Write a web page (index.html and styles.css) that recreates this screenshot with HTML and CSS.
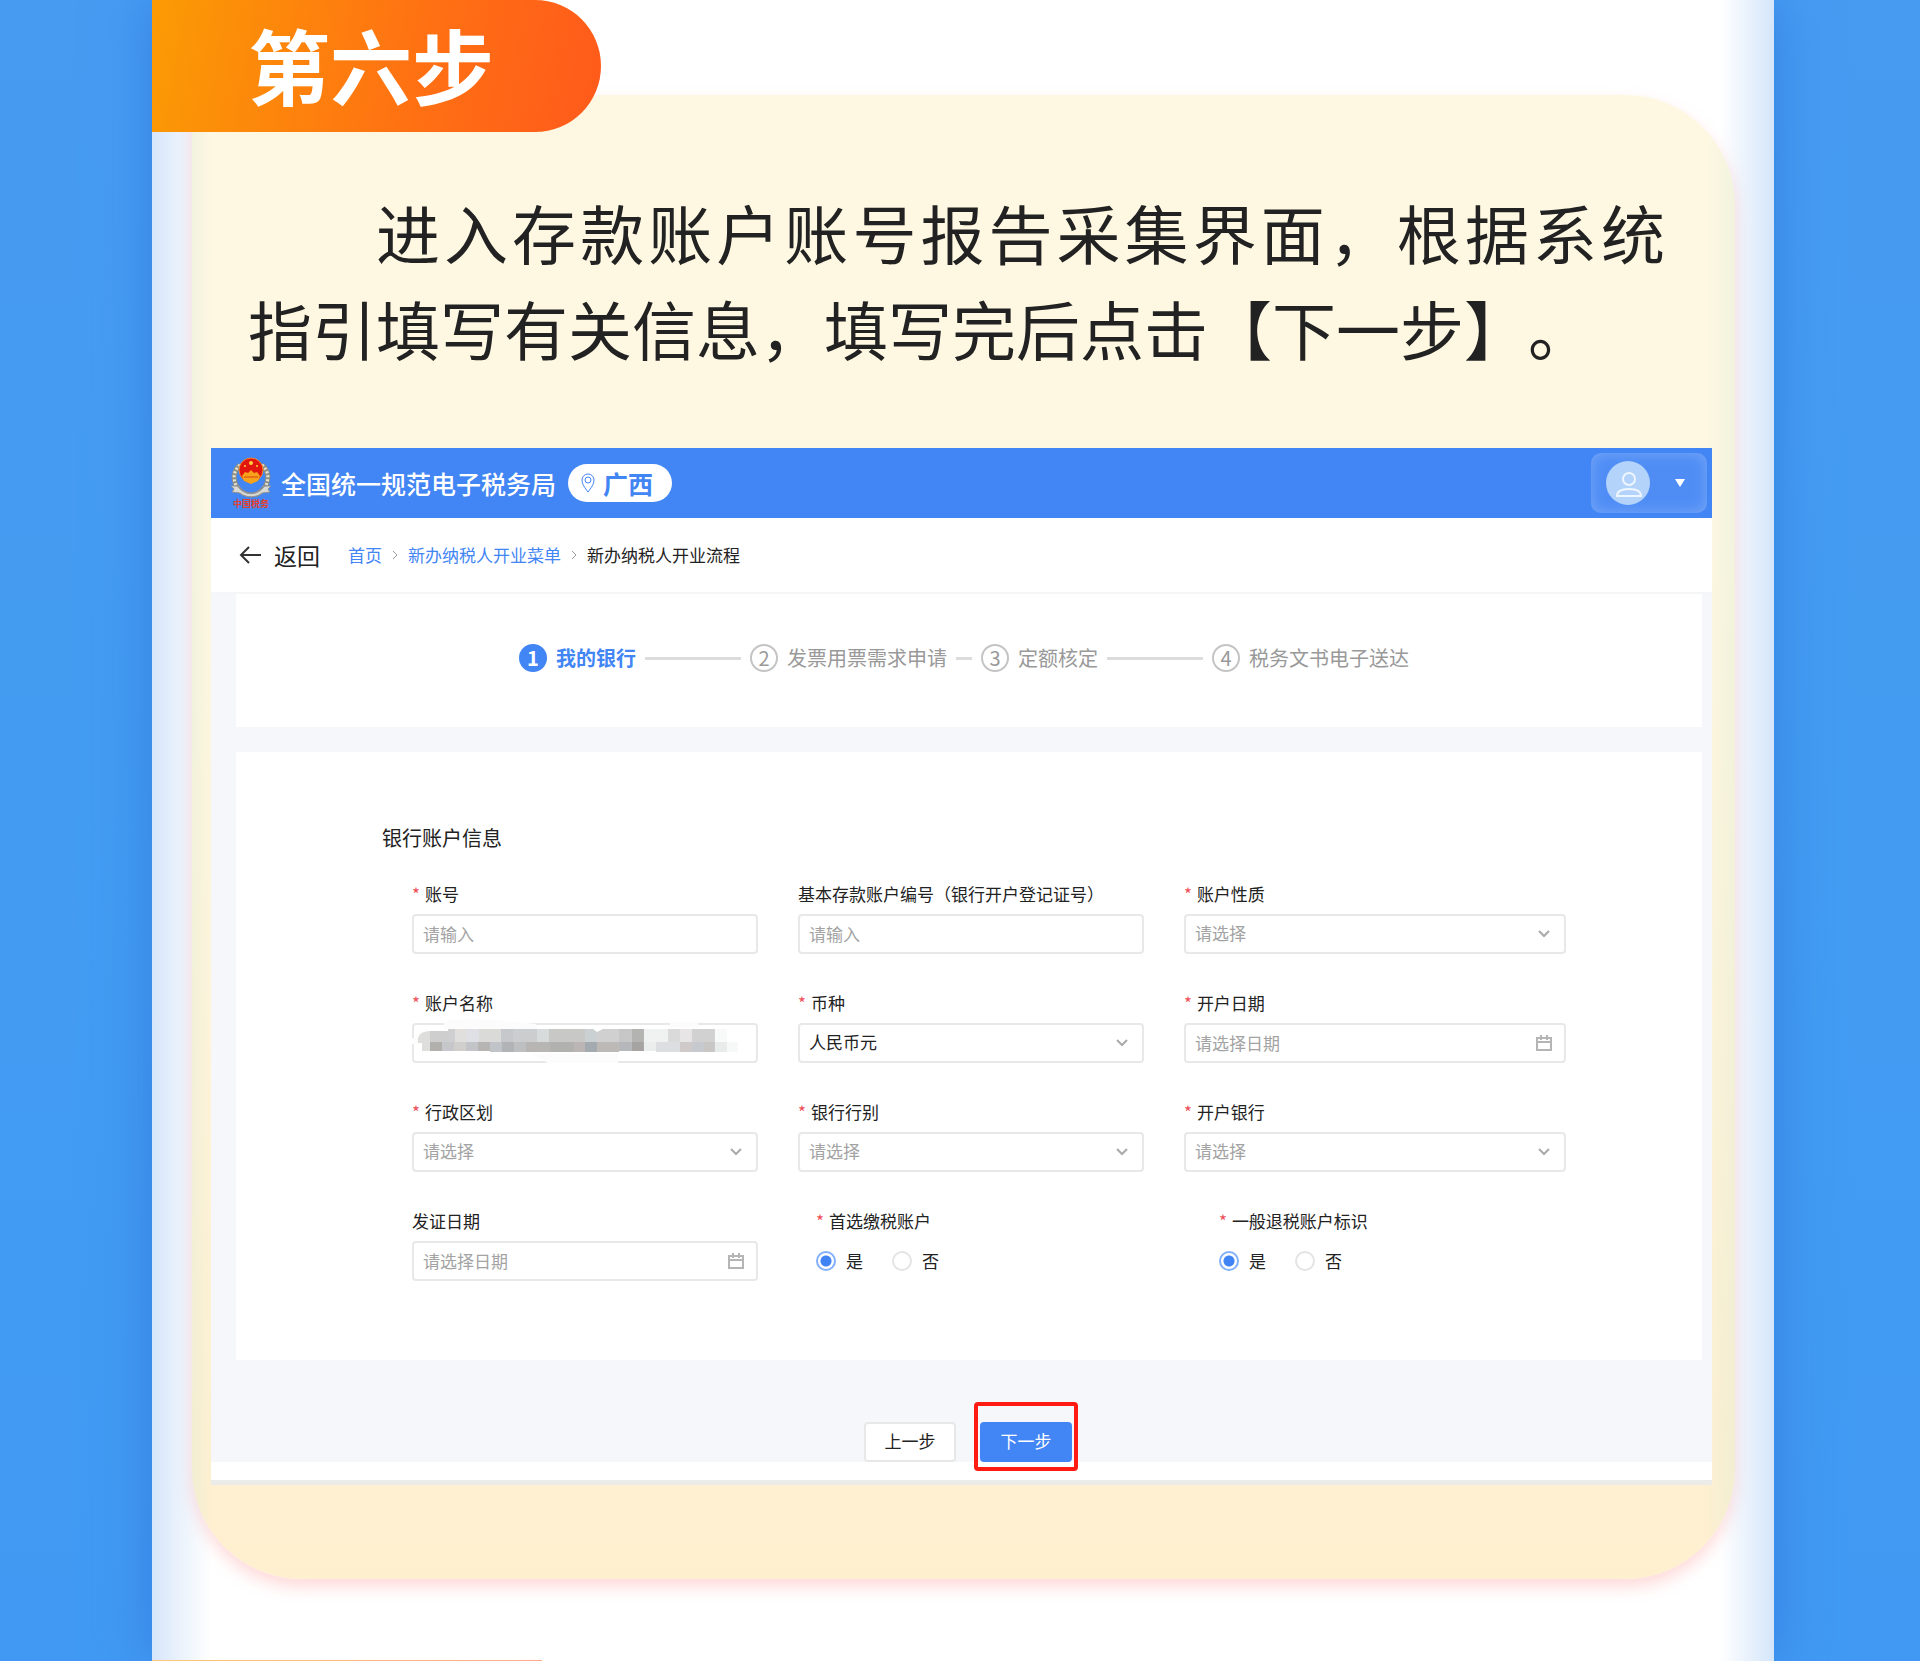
FILE: index.html
```html
<!DOCTYPE html>
<html lang="zh-CN">
<head>
  <meta charset="UTF-8">
  <title>第六步</title>
  <link rel="stylesheet" href="styles.css">
</head>
<body>
  <main class="sheet">
    <h1 class="tag">第六步</h1>

    <section class="card">
      <p class="intro">进入存款账户账号报告采集界面，根据系统<span class="keep">指引填写</span>有关信息，填写完后点击【下一步】。</p>

      <div class="app">
        <header class="topbar">
          <svg class="emblem" viewBox="0 0 40 54">
            <path d="M9 9C3 14 1 23 6 31c4 6 9 8 14 8s10-2 14-8c5-8 3-17-3-22" fill="none" stroke="#8b8f88" stroke-width="5"/>
            <path d="M9 9C3 14 1 23 6 31c4 6 9 8 14 8s10-2 14-8c5-8 3-17-3-22" fill="none" stroke="#e9e4cf" stroke-width="3" stroke-dasharray="2 2"/>
            <path d="M0 30l6 0 4 4c6 5 14 5 20 0l4-4 6 0-3 3 2 3-8 1c-6 5-16 5-22 0l-8-1 2-3z" fill="#d9d9d6" stroke="#8f9294"/>
            <circle cx="20" cy="14" r="12" fill="#e3160f" stroke="#f08a2a"/>
            <circle cx="20" cy="7" r="2" fill="#ffd23c"/>
            <circle cx="14" cy="10" r="1" fill="#ffd23c"/>
            <circle cx="26" cy="10" r="1" fill="#ffd23c"/>
            <path d="M11 20l3-4 3 1 3-3 3 3 3-1 3 4-2 5-7 3-7-3z" fill="#f7a21b"/>
            <path d="M13 21h14" stroke="#d8420f"/>
            <text x="20" y="51" text-anchor="middle" class="emblem-text">中国税务</text>
          </svg>
          <span class="site">全国统一规范电子税务局</span>
          <span class="region">
            <svg class="pin" viewBox="0 0 14 20"><path d="M7 19C4 15 1 11 1 7a6 6 0 0 1 12 0c0 4-3 8-6 12z"/><circle cx="7" cy="7" r="3"/></svg>
            广西
          </span>
          <button class="user" type="button" aria-label="用户">
            <svg class="avatar" viewBox="0 0 45 45">
              <circle cx="22" cy="22" r="22" fill="#b3d3fa"/>
              <g fill="none" stroke="#eef6ff" stroke-width="2">
                <circle cx="23" cy="18" r="6"/>
                <path d="M11 35c0-5 4-7 12-7s12 2 12 7z"/>
              </g>
            </svg>
            <svg class="caret" viewBox="0 0 10 8"><path d="M0 0h10L5 8z" fill="#fff"/></svg>
          </button>
        </header>

        <nav class="crumbs">
          <a class="back" href="#">
            <svg class="arrow" viewBox="0 0 22 18"><path d="M10 1L2 9l8 8M2 9h20"/></svg>
            返回
          </a>
          <a href="#">首页</a>
          <svg class="sep" viewBox="0 0 6 10"><path d="M1 1l4 4-4 4"/></svg>
          <a href="#">新办纳税人开业菜单</a>
          <svg class="sep" viewBox="0 0 6 10"><path d="M1 1l4 4-4 4"/></svg>
          <span>新办纳税人开业流程</span>
        </nav>

        <div class="content">
          <ol class="steps panel">
            <li class="step active"><span class="num">1</span>我的银行</li>
            <li class="step"><span class="num">2</span>发票用票需求申请</li>
            <li class="step"><span class="num">3</span>定额核定</li>
            <li class="step"><span class="num">4</span>税务文书电子送达</li>
          </ol>

          <form id="bankForm">
            <div class="panel bank">
              <h2>银行账户信息</h2>
              <div class="fields">
                <div class="field">
                  <label class="required" for="account">账号</label>
                  <div class="control"><input type="text" id="account" placeholder="请输入"></div>
                </div>
                <div class="field">
                  <label for="licence">基本存款账户编号（银行开户登记证号）</label>
                  <div class="control"><input type="text" id="licence" placeholder="请输入"></div>
                </div>
                <div class="field">
                  <label class="required" for="nature">账户性质</label>
                  <div class="control">
                    <select id="nature" class="empty"><option>请选择</option></select>
                    <svg class="chevron" viewBox="0 0 12 8"><path d="M1 1l5 5 5-5"/></svg>
                  </div>
                </div>

                <div class="field">
                  <label class="required" for="name">账户名称</label>
                  <div class="control">
                    <input type="text" id="name">
                    <!-- masked account name -->
                    <svg class="mask" viewBox="0 0 346 48" preserveAspectRatio="none">
                      <path d="M32 3C60-1 95 3 124 6v5H32zM258 4h28v5h-28zM120 36h86v9h-70zM0 20h6v6H0z" fill="#fcfcfc"/>
                      <path d="M6 20q2-7 12-7v20h-8v-8H6z" fill="#dededd"/>
                      <path d="M18 13h18v11H18z" fill="#cecece"/>
                      <path d="M36 11h7v13h-7z" fill="#cfcfd2"/>
                      <path d="M43 11h12v13H43z" fill="#e1dfdd"/>
                      <path d="M55 11h12v13H55z" fill="#dfe0e5"/>
                      <path d="M67 11h22v13H67z" fill="#dadad9"/>
                      <path d="M89 11h12v13H89z" fill="#c6c8cb"/>
                      <path d="M101 11h24v13h-24z" fill="#cccdcf"/>
                      <path d="M125 11h12v13h-12z" fill="#d8dbdb"/>
                      <path d="M137 11h36v13h-36z" fill="#c8c8c7"/>
                      <path d="M173 11h8l4 3v10h-12z" fill="#cbd0d3"/>
                      <path d="M185 14l6-3h16v13h-22z" fill="#d0d0d0"/>
                      <path d="M207 11h13v13h-13z" fill="#c6c6c7"/>
                      <path d="M220 11h12v13h-12z" fill="#b3b3b1"/>
                      <path d="M232 11h24v13h-24z" fill="#eff2f1"/>
                      <path d="M256 11h12v13h-12z" fill="#dadada"/>
                      <path d="M268 11h12v13h-12z" fill="#e7e5e5"/>
                      <path d="M280 11h23v13h-23z" fill="#d1d1d2"/>
                      <path d="M303 11h12v13h-12z" fill="#f8f9f9"/>
                      <path d="M18 24h12v9H18z" fill="#b2b0ad"/>
                      <path d="M30 24h12v9H30z" fill="#c6c7cb"/>
                      <path d="M42 24h12v9H42z" fill="#d1cfcc"/>
                      <path d="M54 24h12v9H54z" fill="#c3c4c8"/>
                      <path d="M66 24h12v9H66z" fill="#b7b5b3"/>
                      <path d="M78 24h12v10H78z" fill="#c0c3c8"/>
                      <path d="M90 24h12v10H90z" fill="#b0b4b4"/>
                      <path d="M102 24h12v10h-12z" fill="#bdbfc1"/>
                      <path d="M114 24h24v10h-24z" fill="#b8b6b5"/>
                      <path d="M138 24h24v10h-24z" fill="#b1b1b0"/>
                      <path d="M162 24h11v10h-11z" fill="#bbb6b3"/>
                      <path d="M173 24h12v10h-12z" fill="#a4abb0"/>
                      <path d="M185 24h22v10h-22z" fill="#bcb9b7"/>
                      <path d="M207 24h13v9h-13z" fill="#b5b7bb"/>
                      <path d="M220 24h12v9h-12z" fill="#a5a4a2"/>
                      <path d="M232 24h12v9h-12z" fill="#eaeeec"/>
                      <path d="M244 24h24v10h-24z" fill="#dddee2"/>
                      <path d="M268 24h12v10h-12z" fill="#cfcac9"/>
                      <path d="M280 24h12v10h-12z" fill="#c6c9ce"/>
                      <path d="M292 24h11v10h-11z" fill="#c9c6c6"/>
                      <path d="M303 24h12v10h-12z" fill="#e7ecea"/>
                      <path d="M315 24h11v10h-11z" fill="#f7f8f8"/>
                    </svg>
                  </div>
                </div>
                <div class="field">
                  <label class="required" for="currency">币种</label>
                  <div class="control">
                    <select id="currency"><option>人民币元</option></select>
                    <svg class="chevron" viewBox="0 0 12 8"><path d="M1 1l5 5 5-5"/></svg>
                  </div>
                </div>
                <div class="field">
                  <label class="required" for="openDate">开户日期</label>
                  <div class="control">
                    <input type="text" id="openDate" placeholder="请选择日期">
                    <svg class="calendar" viewBox="0 0 16 16"><path d="M1 3h14v12H1zM1 7h14M5 0v5M11 0v5"/></svg>
                  </div>
                </div>

                <div class="field">
                  <label class="required" for="district">行政区划</label>
                  <div class="control">
                    <select id="district" class="empty"><option>请选择</option></select>
                    <svg class="chevron" viewBox="0 0 12 8"><path d="M1 1l5 5 5-5"/></svg>
                  </div>
                </div>
                <div class="field">
                  <label class="required" for="bankType">银行行别</label>
                  <div class="control">
                    <select id="bankType" class="empty"><option>请选择</option></select>
                    <svg class="chevron" viewBox="0 0 12 8"><path d="M1 1l5 5 5-5"/></svg>
                  </div>
                </div>
                <div class="field">
                  <label class="required" for="bankName">开户银行</label>
                  <div class="control">
                    <select id="bankName" class="empty"><option>请选择</option></select>
                    <svg class="chevron" viewBox="0 0 12 8"><path d="M1 1l5 5 5-5"/></svg>
                  </div>
                </div>

                <div class="field">
                  <label for="issueDate">发证日期</label>
                  <div class="control">
                    <input type="text" id="issueDate" placeholder="请选择日期">
                    <svg class="calendar" viewBox="0 0 16 16"><path d="M1 3h14v12H1zM1 7h14M5 0v5M11 0v5"/></svg>
                  </div>
                </div>
                <fieldset class="field pay">
                  <legend class="required">首选缴税账户</legend>
                  <div class="radios">
                    <label><input type="radio" name="pay" checked>是</label>
                    <label><input type="radio" name="pay">否</label>
                  </div>
                </fieldset>
                <fieldset class="field refund">
                  <legend class="required">一般退税账户标识</legend>
                  <div class="radios">
                    <label><input type="radio" name="refund" checked>是</label>
                    <label><input type="radio" name="refund">否</label>
                  </div>
                </fieldset>
              </div>
            </div>

            <div class="actions">
              <button type="button">上一步</button>
              <div class="marked"><button type="submit" class="primary">下一步</button></div>
            </div>
          </form>
        </div>
      </div>
    </section>

    <div class="next-tag"></div>
  </main>
</body>
</html>
```
FILE: styles.css
```css
* {
  box-sizing: border-box;
}

body {
  margin: 0;
  background: linear-gradient(#479bf1, #439cf1 50%, #4199f3);
  color: #222;
  font-family: "Noto Sans CJK SC", sans-serif;
  font-size: 17px;
  line-height: 24px;
  text-spacing-trim: space-all;
}

.sheet {
  display: flow-root;
  margin: 0 146px 0 152px;
  background: linear-gradient(90deg, #d6e5fa, #e8f1fc 24px, #fff 60px, #fff calc(100% - 54px), #e8f1fc calc(100% - 24px), #d4e5fa);
  box-shadow: 0 0 50px #3481e0;
}

.tag {
  position: relative;
  width: 449px;
  margin: 0;
  padding: 0 0 4px 96px;
  border-radius: 0 66px 66px 0;
  background: linear-gradient(100deg, #fb9b04, #ff7013 60%, #ff5a1b);
  color: #fff;
  font-size: 82px;
  font-weight: 700;
  line-height: 128px;
}

.card {
  margin: -37px 39px 81px 40px;
  padding: 88px 23px 94px 19px;
  border-radius: 0 110px 110px 110px;
  border-top-left-radius: 0;
  background:
    linear-gradient(90deg, rgba(214, 232, 214, 0.3), transparent 20px, transparent calc(100% - 30px), rgba(214, 232, 214, 0.3)),
    linear-gradient(#fef8e2, #fef8e2 30%, #feefcf);
  box-shadow: 0 8px 16px rgba(255, 150, 150, 0.35);
}

.intro {
  margin: 0 47px 73px 37px;
  font-size: 64px;
  line-height: 96px;
  text-align: justify;
  text-indent: 2em;
}

.keep {
  white-space: nowrap;
}

.app {
  padding-bottom: 18px;
  border-bottom: 5px solid #ebecea;
  background: #fff;
}

.topbar {
  display: flex;
  align-items: center;
  height: 70px;
  padding: 0 5px 0 20px;
  background: #4285f4;
  color: #fff;
}

.emblem {
  width: 40px;
  height: 54px;
}

.emblem-text {
  fill: #e0402c;
  font-size: 9px;
  font-weight: 700;
}

.site {
  margin: 0 12px 0 10px;
  font-size: 25px;
  font-weight: 500;
}

.region {
  display: flex;
  align-items: center;
  gap: 8px;
  height: 38px;
  padding: 0 19px 0 13px;
  border-radius: 19px;
  background: #fff;
  color: #4285f4;
  font-size: 25px;
  font-weight: 700;
}

.pin {
  width: 14px;
  height: 20px;
  fill: none;
  stroke: #4285f4;
}

.user {
  display: flex;
  align-items: center;
  gap: 24px;
  width: 116px;
  height: 60px;
  margin-left: auto;
  padding: 0 15px;
  border: 0;
  border-radius: 10px;
  background: #4f8df5;
  box-shadow: inset 0 0 14px #79a8f8;
}

.avatar {
  width: 45px;
  height: 45px;
}

.caret {
  width: 10px;
  height: 8px;
}

.crumbs {
  display: flex;
  align-items: center;
  gap: 10px;
  height: 74px;
  padding-left: 28px;
}

.crumbs a {
  color: #4285f4;
  text-decoration: none;
}

.crumbs .back {
  display: flex;
  align-items: center;
  gap: 13px;
  margin-right: 18px;
  color: #222;
  font-size: 23px;
}

.arrow {
  width: 22px;
  height: 18px;
  fill: none;
  stroke: #333;
  stroke-width: 2;
}

.sep {
  width: 6px;
  height: 10px;
  fill: none;
  stroke: #999;
}

.content {
  padding: 0 10px 0 25px;
  border-top: 2px solid #f5f6f8;
  background: #f6f7fa;
}

.panel {
  background: #fff;
}

.steps {
  display: flex;
  justify-content: center;
  margin: 0 0 25px;
  padding: 50px 10px 55px 0;
  list-style: none;
  color: #999;
  font-size: 20px;
  line-height: 28px;
}

.step {
  display: flex;
  align-items: center;
  gap: 9px;
  width: 231px;
  padding-right: 9px;
  white-space: nowrap;
}

.step::after {
  content: "";
  flex: 1;
  height: 3px;
  background: #dcdcdc;
}

.step:last-child {
  width: auto;
  padding-right: 0;
}

.step:last-child::after {
  display: none;
}

.num {
  width: 28px;
  height: 28px;
  border: 2px solid #c4c4c4;
  border-radius: 50%;
  line-height: 24px;
  text-align: center;
}

.active {
  color: #4285f4;
  font-weight: 700;
}

.active .num {
  border-color: #4285f4;
  background: #4285f4;
  color: #fff;
}

.bank {
  padding: 71px 136px 79px 176px;
}

.bank h2 {
  margin: 0 0 29px -30px;
  font-size: 20px;
  font-weight: 400;
  line-height: 30px;
}

.fields {
  display: grid;
  grid-template-columns: 345fr 345fr 381fr;
  gap: 37px 40px;
}

.field {
  min-width: 0;
  margin: 0;
  padding: 0;
  border: 0;
}

.field > label,
legend {
  display: block;
  margin-bottom: 8px;
  padding: 0;
}

.required::before {
  content: "*";
  margin-right: 5px;
  color: #f0505a;
}

.control {
  display: flex;
  align-items: center;
  position: relative;
  height: 40px;
  padding-right: 12px;
  border: 2px solid #e8e8e8;
  border-radius: 4px;
}

.control input,
.control select {
  flex: 1;
  min-width: 0;
  height: 36px;
  padding: 0 9px 2px;
  border: 0;
  outline: 0;
  appearance: none;
  background: none;
  color: #222;
  font: inherit;
}

.control input::placeholder,
.control .empty {
  color: #a3a3a3;
}

.chevron {
  width: 12px;
  height: 8px;
  margin-right: 2px;
  fill: none;
  stroke: #aaa;
  stroke-width: 2;
}

.calendar {
  width: 16px;
  height: 16px;
  fill: none;
  stroke: #b5b5b5;
  stroke-width: 2;
}

.mask {
  position: absolute;
  top: -7px;
  left: -2px;
  width: calc(100% + 4px);
  height: 48px;
  pointer-events: none;
}

.pay {
  padding-left: 18px;
}

.refund {
  padding-left: 35px;
}

.radios {
  display: flex;
  gap: 29px;
  height: 40px;
}

.radios label {
  display: flex;
  align-items: center;
  gap: 10px;
}

.radios input {
  width: 20px;
  height: 20px;
  margin: 0;
  border: 2px solid #e4e4e4;
  border-radius: 50%;
  appearance: none;
}

.radios input:checked {
  border-color: #82b0fa;
  background: radial-gradient(#3f83f5 5px, #fff 6px);
}

.actions {
  display: flex;
  justify-content: center;
  gap: 24px;
  padding: 62px 2px 0 0;
}

.actions button {
  width: 92px;
  height: 40px;
  padding: 0 0 2px;
  border: 2px solid #e8e8e8;
  border-radius: 4px;
  background: #fff;
  color: #222;
  font: inherit;
}

.actions .primary {
  border-color: #4285f4;
  background: #4285f4;
  color: #fff;
}

.marked {
  position: relative;
}

/* red frame around the button to press */
.marked::after {
  content: "";
  position: absolute;
  inset: -20px -6px -9px;
  border: 4px solid #ff1a12;
  border-radius: 4px;
  pointer-events: none;
}

.next-tag {
  width: 390px;
  height: 1px;
  background: linear-gradient(90deg, #fbc877, #ffa98c);
}
```
